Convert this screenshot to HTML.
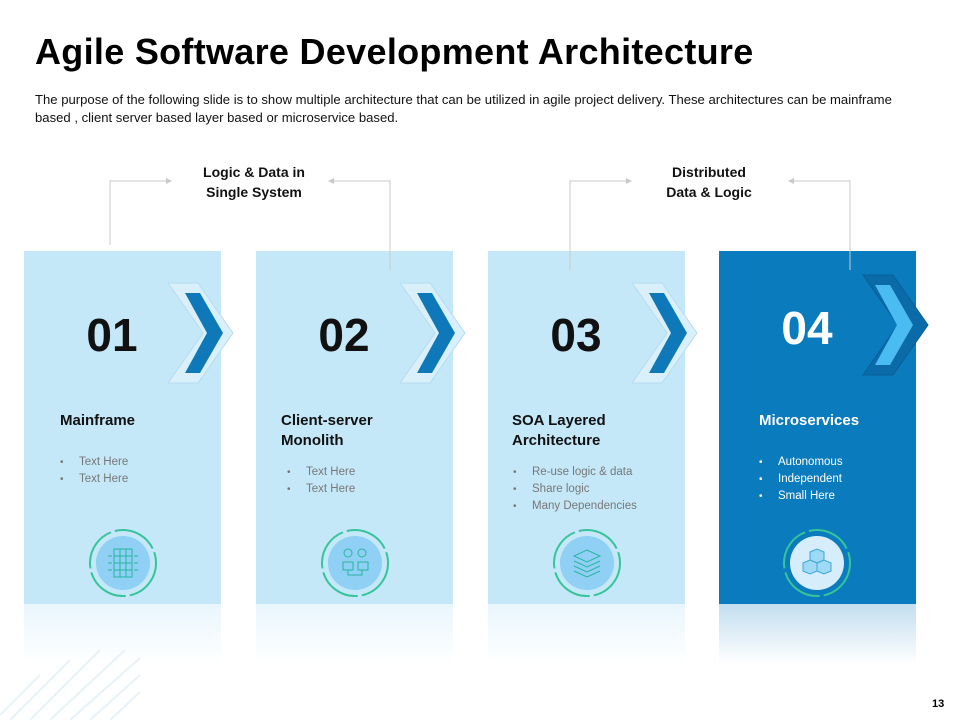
<!DOCTYPE html>
<html><head><meta charset="utf-8"><style>
*{margin:0;padding:0;box-sizing:border-box}
body{width:960px;height:720px;background:#fff;position:relative;overflow:hidden;font-family:"Liberation Sans",sans-serif}
.a{position:absolute}
h1{position:absolute;left:35px;top:31px;font-size:36px;font-weight:bold;color:#000;letter-spacing:0.3px;white-space:nowrap}
.desc{left:35px;top:91px;width:895px;font-size:13.1px;line-height:18px;color:#111}
.card{position:absolute;top:251px;width:197px;height:353px;background:#c5e8f9}
.refl{position:absolute;top:604px;width:197px;height:60px;background:linear-gradient(#e9f6fd,#fff)}
.num{position:absolute;font-size:46px;font-weight:bold;color:#111;width:120px;text-align:center}
.ttl{position:absolute;font-size:15px;font-weight:bold;color:#111;line-height:20px}
ul{position:absolute;list-style:none;font-size:11.5px;color:#777;line-height:16px}
ul li:before{content:"•";display:inline-block;width:19px;font-size:10px}
.lbl{position:absolute;font-size:14px;font-weight:bold;text-align:center;line-height:20px;color:#111;width:160px}
</style></head><body>
<h1>Agile Software Development Architecture</h1>
<div class="a desc">The purpose of the following slide is to show multiple architecture that can be utilized in agile project delivery. These architectures can be mainframe based , client server based layer based or microservice based.</div>
<div class="lbl" style="left:174px;top:162px">Logic &amp; Data in<br>Single System</div>
<div class="lbl" style="left:629px;top:162px">Distributed<br>Data &amp; Logic</div>

<div class="card" style="left:24px"></div><div class="refl" style="left:24px"></div>
<div class="card" style="left:256px"></div><div class="refl" style="left:256px"></div>
<div class="card" style="left:488px"></div><div class="refl" style="left:488px"></div>
<div class="card" style="left:719px;background:#0a7bbd"></div><div class="refl" style="left:719px;background:linear-gradient(#c2deee,#fff)"></div>

<svg class="a" style="left:0;top:0" width="960" height="720">
<g stroke="#c8c8c8" fill="none" stroke-width="1">
<path d="M110 245V181H170M390 270V181H330M570 270V181H630M850 270V181H790"/>
</g>
<g fill="#c8c8c8">
<path d="M172 181l-6-3v6z M328 181l6-3v6z M632 181l-6-3v6z M788 181l6-3v6z"/>
</g>
<g id="ch">
<path d="M168 283h30l35 50-35 50h-30l35-50z" fill="#d9f0fb" stroke="#b4dcf0"/>
<path d="M185 293h15l23 40-23 40h-15l22-40z" fill="#0f78b8"/>
</g>
<use href="#ch" x="232"/>
<use href="#ch" x="464"/>
<g transform="translate(695,-8)">
<path d="M168 283h30l35 50-35 50h-30l35-50z" fill="#0b6aa8" stroke="#0a5f98"/>
<path d="M180 293h15l23 40-23 40h-15l22-40z" fill="#4bbcf2"/>
</g>
<g fill="none" stroke="#37c49a" stroke-width="2">
<circle cx="123" cy="563" r="33" stroke-dasharray="45 4"/>
<circle cx="355" cy="563" r="33" stroke-dasharray="45 4"/>
<circle cx="587" cy="563" r="33" stroke-dasharray="45 4"/>
<circle cx="817" cy="563" r="33" stroke-dasharray="45 4"/>
</g>
<circle cx="123" cy="563" r="27" fill="#8fd0f4"/>
<circle cx="355" cy="563" r="27" fill="#8fd0f4"/>
<circle cx="587" cy="563" r="27" fill="#8fd0f4"/>
<circle cx="817" cy="563" r="27" fill="#d6eefb"/>
<g stroke="#2ab5a0" fill="none" stroke-width="1">
<rect x="114" y="549" width="18" height="28"/><path d="M120 549v28M126 549v28M114 556h18M114 563h18M114 570h18M108 556h4M108 563h4M108 570h4M134 556h4M134 563h4M134 570h4"/>
<rect x="343" y="562" width="10" height="8"/><rect x="358" y="562" width="10" height="8"/><circle cx="348" cy="553" r="4"/><circle cx="362" cy="553" r="4"/><path d="M348 570v5h14v-5"/>
<path d="M574 556l13-6 13 6-13 6z M574 561l13 6 13-6 M574 566l13 6 13-6 M574 571l13 6 13-6"/>
</g>
<g stroke="#3fa6d8" fill="#9ed9f5" stroke-width="1">
<path d="M810 552l7-3 7 3v8l-7 3-7-3z"/><path d="M803 563l7-3 7 3v8l-7 3-7-3z"/><path d="M817 563l7-3 7 3v8l-7 3-7-3z"/>
</g>
<g stroke="#e8f1f6" stroke-width="2">
<path d="M0 715l40-40M10 720l60-60M30 720l70-70M50 720l75-70M70 720l70-62M90 720l50-45M110 720l30-28"/>
</g>
</svg>

<div class="num" style="left:52px;top:308px">01</div>
<div class="num" style="left:284px;top:308px">02</div>
<div class="num" style="left:516px;top:308px">03</div>
<div class="num" style="left:747px;top:301px;color:#fff">04</div>

<div class="ttl" style="left:60px;top:411px">Mainframe</div>
<ul style="left:60px;top:454px"><li>Text Here</li><li>Text Here</li></ul>
<div class="ttl" style="left:281px;top:411px">Client-server<br>Monolith</div>
<ul style="left:287px;top:464px"><li>Text Here</li><li>Text Here</li></ul>
<div class="ttl" style="left:512px;top:411px">SOA Layered<br>Architecture</div>
<ul style="left:513px;top:464px"><li>Re-use logic &amp; data</li><li>Share logic</li><li>Many Dependencies</li></ul>
<div class="ttl" style="left:759px;top:411px;color:#fff">Microservices</div>
<ul style="left:759px;top:454px;color:#fff"><li>Autonomous</li><li>Independent</li><li>Small Here</li></ul>

<div class="a" style="left:932px;top:698px;font-size:11px;font-weight:bold">13</div>
</body></html>
